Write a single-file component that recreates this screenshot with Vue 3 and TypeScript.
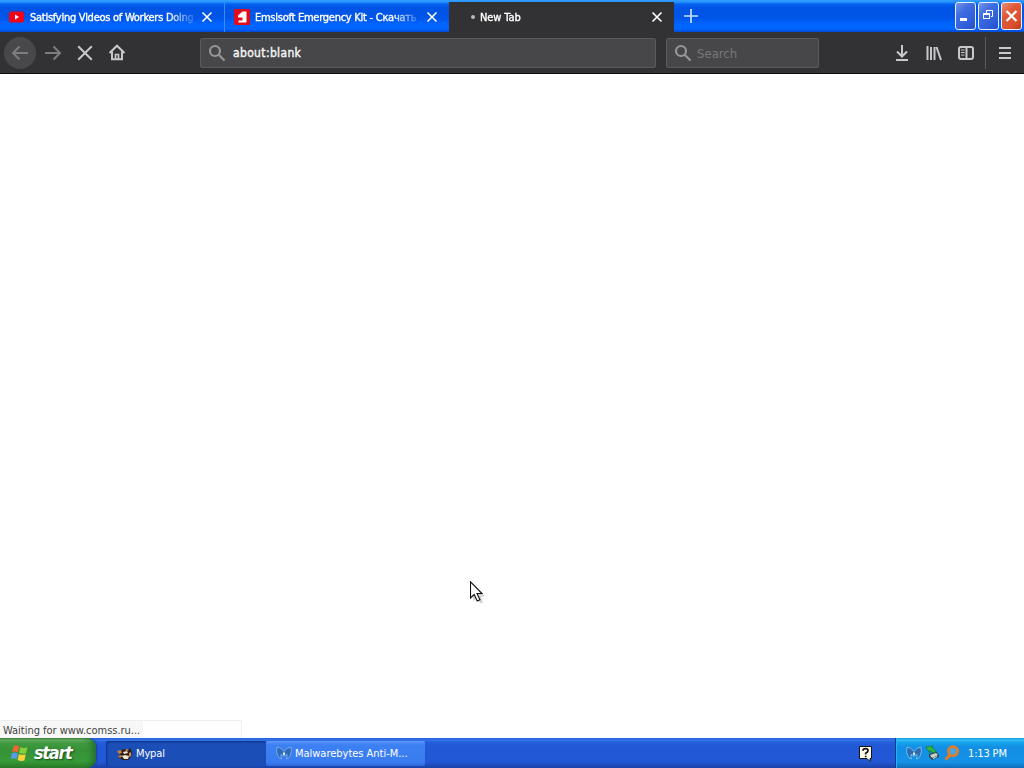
<script setup lang="ts">
interface Tab { title: string; kind: 'video' | 'shield' | 'blank'; active: boolean }
const tabs: Tab[] = [
  { title: 'Satisfying Videos of Workers Doing', kind: 'video', active: false },
  { title: 'Emsisoft Emergency Kit - Скачать', kind: 'shield', active: false },
  { title: 'New Tab', kind: 'blank', active: true },
]
</script>

<template>
  <div class="desktop">
    <header class="tabbar">
      <div v-for="tab in tabs" :key="tab.title" class="tab" :class="[tab.kind, { active: tab.active }]">
        <svg class="fav" width="16" height="16" viewBox="0 0 16 16">
          <template v-if="tab.kind === 'video'">
            <rect x="0" y="2.5" width="15" height="11" rx="2.5" fill="#f50018" />
            <path d="M6 5.500v5l4-2.500z" fill="#fff" />
          </template>
          <template v-else-if="tab.kind === 'shield'">
            <rect width="16" height="16" rx="1" fill="#e20b1c" />
            <path d="M8.500 2.500H12.500V13.500H4.500V11.500H8.500V8.500H4V6.500z" fill="#fff" />
          </template>
          <circle v-else cx="8" cy="8" r="2" fill="#b9b9bb" />
        </svg>
        <span class="title">{{ tab.title }}</span>
        <svg class="close" width="12" height="12" viewBox="0 0 12 12"><path d="M1.500 1.500l9 9M10.500 1.500l-9 9" /></svg>
      </div>
      <svg class="plus" width="16" height="16" viewBox="0 0 16 16"><path d="M8 1v14M1 8h14" /></svg>
      <div class="winbtns">
        <div class="wb"><svg width="19" height="26" viewBox="0 0 19 26"><path d="M4 16.500h7" stroke="#fff" stroke-width="3" /></svg></div>
        <div class="wb"><svg width="19" height="26" viewBox="0 0 19 26" fill="none" stroke="#fff"><path d="M7.500 10V7.500h6v6H12M7 7.500h7" /><rect x="4.500" y="10.500" width="6" height="5" /><path d="M4 11h7" stroke-width="2" /></svg></div>
        <div class="wb red"><svg width="19" height="26" viewBox="0 0 19 26"><path d="M4.500 8l10 10M14.500 8l-10 10" stroke="#fff" stroke-width="2.200" /></svg></div>
      </div>
    </header>

    <nav class="toolbar">
      <div class="back">
        <svg width="18" height="16" viewBox="0 0 18 16"><path d="M17 8H2M8.500 1.500L2 8l6.500 6.500" /></svg>
      </div>
      <svg class="forward" width="18" height="16" viewBox="0 0 18 16"><path d="M1 8h15M9.500 1.500L16 8l-6.500 6.500" /></svg>
      <svg class="stop" width="16" height="16" viewBox="0 0 16 16"><path d="M1.200 1.200l13.600 13.600M14.800 1.200L1.200 14.800" /></svg>
      <svg class="home" width="18" height="17" viewBox="0 0 18 17"><path d="M1.500 9L9 1.700 16.500 9M4 7.500v7.700h10V7.500" /><path d="M7.500 15.500v-5h3v5" stroke-width="1.700" /></svg>
      <div class="field url">
        <svg width="18" height="18" viewBox="0 0 18 18"><circle cx="7" cy="7" r="5" /><path d="M10.700 10.700L16.500 16.500" /></svg>
        <span>about:blank</span>
      </div>
      <div class="field search">
        <svg width="18" height="18" viewBox="0 0 18 18"><circle cx="7" cy="7" r="5" /><path d="M10.700 10.700L16.500 16.500" /></svg>
        <span>Search</span>
      </div>
      <div class="tools">
        <svg width="16" height="18" viewBox="0 0 16 18"><path d="M8 1v11M3 7.500l5 5 5-5M2 16h12" /></svg>
        <svg width="16" height="18" viewBox="0 0 16 18"><path d="M1.500 2v14M5 3v13M8.500 3v13M10.500 3l4.500 13" /></svg>
        <svg width="16" height="18" viewBox="0 0 16 18"><rect x="1" y="3" width="14" height="12" rx="2" /><path d="M8.500 3v12" /><path d="M3 6h3.500M3 8.500h3.500M3 11h3.500" stroke-width="1.200" /></svg>
        <i class="sep"></i>
        <svg width="16" height="18" viewBox="0 0 16 18"><path d="M2 4h12M2 9h12M2 14h12" /></svg>
      </div>
    </nav>

    <main class="page">
      <svg class="cursor" width="16" height="24" viewBox="0 0 16 24">
        <path d="M3 4v16l4-3 3 5h3l-2-6 4-1z" fill="#aaa" opacity=".5" />
        <path d="M.5.800v16.200l3.700-3.500 3 6.500 2.800-1.200-3-6.300h5z" fill="#fff" stroke="#111" stroke-width="1.100" />
      </svg>
      <div class="status"><span>Waiting for www.comss.ru...</span></div>
    </main>

    <footer class="taskbar">
      <div class="start">
        <svg width="19" height="19" viewBox="0 0 19 19">
          <path d="M3.500 2.200Q6.500.400 9.200 2.400L8 8.300Q5.200 6.800 2.200 8.200z" fill="#ee6731" />
          <path d="M10.300 3Q13.500 5 17.500 3.300L16 9.200Q12.500 10.300 9.100 8.700z" fill="#86cf3b" />
          <path d="M2 9.300Q5.200 7.800 7.800 9.400L6.500 15.200Q4 13.500.700 15z" fill="#589cf2" />
          <path d="M8.900 9.900Q12.400 11.500 15.800 10.200L14.400 16.500Q11 17.700 7.600 15.900z" fill="#fbd23c" />
        </svg>
        <span>start</span>
      </div>
      <div class="task pressed">
        <svg width="16" height="16" viewBox="0 0 16 16">
          <path d="M4 4l5-1 2 1 2-2 2 4-1 5-3 3H6l-4-2 1-5z" fill="#2a1c16" />
          <path d="M0 5l4-1 1 3-3 1zM1 10l3-1 2 1-3 2z" fill="#bf8144" />
          <path d="M6 6l4-1 1 2-4 1zM5 10l3-1 4 1-1 3H7z" fill="#f1e4cc" />
          <path d="M12 7l2-1v4l-2 1zM8 4l2-1 2 1-2 1z" fill="#d98e43" />
        </svg>
        <span>Mypal</span>
      </div>
      <div class="task raised">
        <svg width="16" height="16" viewBox="0 0 16 16"><path d="M1 2q4 0 7 4.500Q11 2 15 2q1 5-.500 8-1 3.500-4 4 1-2 .5-4.500L8 11 5 9.500q-.5 2.500.500 4.500-3-.5-4-4Q0 7 1 2z" fill="#316ab8" stroke="#80b9ee" stroke-width=".8" /><path d="M7 7l1 1 1-1v2.500l-1 1-1-1z" fill="#e1f3ff" /></svg>
        <span>Malwarebytes Anti-M...</span>
      </div>
      <div class="help"><svg width="14" height="16" viewBox="0 0 14 16"><path d="M.5.500h12v12H11v3l-3-3H.5z" fill="#fffce8" stroke="#151515" /><path d="M4 4.700q0-2 2.500-2t2.500 2q0 1.300-2.300 2.500V8.500M6.700 9.700v1.600" fill="none" stroke="#111" stroke-width="1.700" /></svg></div>
      <div class="tray">
        <svg width="16" height="16" viewBox="0 0 16 16"><path d="M1 2q4 0 7 4.500Q11 2 15 2q1 5-.500 8-1 3.500-4 4 1-2 .5-4.500L8 11 5 9.500q-.5 2.500.500 4.500-3-.5-4-4Q0 7 1 2z" fill="#2f6bb0" stroke="#83caf0" stroke-width=".8" /><path d="M7 7l1 1 1-1v2.500l-1 1-1-1z" fill="#dff5ff" /></svg>
        <svg width="16" height="16" viewBox="0 0 16 16"><path d="M4 9l7-3 3 4v2l-7 3-3-3z" fill="#34484b" /><path d="M5 10l6-2 2 2-6 3z" fill="#c5d3d5" /><path d="M8 13l4-2v1l-4 2z" fill="#eee" /><path d="M1 2l7-1-1 2q3 1 4 4l-3 1Q7 5 4 6l1 2z" fill="#36b540" stroke="#14752a" stroke-width=".6" /></svg>
        <svg width="16" height="16" viewBox="0 0 16 16"><circle cx="9" cy="6.300" r="4.700" fill="#4da5d8" stroke="#e77a22" stroke-width="2.600" /><path d="M6 10L1.500 14.500" stroke="#e77a22" stroke-width="3" /></svg>
        <time>1:13 PM</time>
      </div>
    </footer>
  </div>
</template>

<style>
html, body { margin: 0; overflow: hidden; }
</style>

<style scoped>
* { box-sizing: border-box; }
svg { display: block; flex: none; }
span, time { white-space: nowrap; }
.desktop { width: 1024px; height: 768px; display: flex; flex-direction: column; font-family: "DejaVu Sans Condensed", "DejaVu Sans", sans-serif; font-stretch: condensed; font-size: 11px; }
.tabbar { height: 32px; display: flex; padding-top: 2px; background: linear-gradient(#369bff 0, #2493ff 2px, #0561f1 4px, #0054e5 8px, #0055e8 18px, #0064ff 24px, #0065ff 29px, #0048d4 32px); }
.tab { height: 30px; width: 225px; display: flex; align-items: center; padding: 0 11px 0 9px; color: #fff; border-right: 1px solid #398cff; }
.tab.active { background: #323234; border: 0; }
.tab.shield { width: 224px; border-right: 0; }
.tab.active .fav { margin-left: 7px; }
.title { width: 165px; margin-left: 5px; overflow: hidden; letter-spacing: -.26px; -webkit-text-stroke: .35px currentColor; mask-image: linear-gradient(90deg, #000 138px, transparent 168px); }
.active .title { width: 164px; margin-left: -1px; letter-spacing: -.1px; }
.close { margin-left: auto; }
.close path { fill: none; stroke: #fff; stroke-width: 1.6; }
.plus { margin: 6px 0 0 9px; }
.plus path { stroke: #c6e1ff; stroke-width: 1.7; }
.winbtns { margin-left: auto; display: flex; gap: 2px; padding-right: 2px; }
.wb { width: 21px; height: 28px; border: 1px solid #e9efff; border-radius: 3px; background: linear-gradient(135deg, #7594ec, #3f6ce0 35%, #2f5fdb 70%, #2450c8); }
.wb.red { background: linear-gradient(135deg, #ea9078, #e05a38 35%, #d9502c 75%, #b93a1a); }
.toolbar { height: 42px; background: #323234; border-bottom: 1px solid #0c0c0d; display: flex; align-items: center; padding-left: 4px; }
.toolbar svg { fill: none; stroke: #c8c8ca; stroke-width: 2; }
.back { width: 32px; height: 32px; border-radius: 50%; background: #48484a; display: grid; place-items: center; }
.toolbar .back svg, .toolbar .forward { stroke: #7d7d7f; }
.forward { margin-left: 8px; }
.stop { margin-left: 15px; }
.home { margin-left: 15px; }
.field { height: 30px; border: 1px solid #5b5b5d; border-radius: 2px; background: #474749; display: flex; align-items: center; padding-left: 7px; }
.toolbar .field svg { stroke: #969698; stroke-width: 2.2; }
.field span { margin-left: 7px; }
.url { width: 456px; margin-left: 74px; color: #f4f4f5; font-size: 12px; letter-spacing: .35px; }
.url span { -webkit-text-stroke: .4px currentColor; margin-top: 1px; }
.search { width: 153px; margin-left: 10px; color: #77777a; font-size: 13px; }
.search span { margin: 1px 0 0 5px; }
.tools { margin-left: auto; height: 34px; display: flex; align-items: center; gap: 16px; padding-right: 11px; }
.sep { width: 1px; height: 32px; margin: 0 -5px; background: #59595b; }
.page { flex: 1; background: #fff; position: relative; display: flex; align-items: flex-end; }
.cursor { position: absolute; left: 470px; top: 507px; }
.status { width: 242px; height: 18px; border: 1px solid #eee; border-bottom: 0; border-left: 0; background: #fefefe; }
.status span { display: block; width: 143px; height: 17px; padding-left: 3px; background: #f7f7f7; color: #444; line-height: 19px; letter-spacing: -.02px; }
.taskbar { height: 30px; display: flex; align-items: center; color: #fff; background: linear-gradient(#245cda 0, #3474e8 2px, #2460dc 4px, #2257d5 8px, #2257d5 24px, #1941a5 30px); }
.start { width: 96px; height: 30px; padding-left: 10px; display: flex; align-items: center; border-radius: 0 9px 9px 0; background: linear-gradient(#3a873a 0, #65ac65 2px, #409b40 5px, #379137 12px, #379b38 23px, #287b29 30px); box-shadow: inset -6px 0 6px -3px #216b2d, 1px 0 2px #173e9b; }
.start span { margin: -1px 0 0 5px; font: italic bold 18px "DejaVu Sans Condensed", "DejaVu Sans", sans-serif; font-stretch: condensed; letter-spacing: -1.3px; text-shadow: 1px 1px 2px #174719; }
.task { height: 25px; display: flex; align-items: center; border-radius: 2px; margin-top: 1px; }
.task span { letter-spacing: -.15px; }
.pressed { width: 160px; margin-left: 10px; padding-left: 11px; background: #1c4eb8; box-shadow: inset 1px 1px 2px #0d3386; }
.pressed span { margin-left: 3px; }
.raised { width: 159px; padding-left: 10px; background: linear-gradient(#6098f8, #3d80f3 4px, #397cf0 21px, #2e6adc); }
.raised svg { margin-top: -2px; }
.raised span { margin: -1px 0 0 3px; letter-spacing: -.02px; }
.help { margin: 2px 0 0 auto; padding-right: 22px; }
.tray { width: 129px; height: 30px; padding-left: 10px; display: flex; align-items: center; gap: 3px; border-left: 1px solid #083d8d; background: linear-gradient(#1292df 0, #35c2f7 2px, #18a6eb 4px, #128fe5 9px, #1492e8 24px, #0e6cb9 30px); box-shadow: inset 1px 0 #26b3f4; }
.tray time { margin-left: 5px; letter-spacing: -.15px; }
</style>
